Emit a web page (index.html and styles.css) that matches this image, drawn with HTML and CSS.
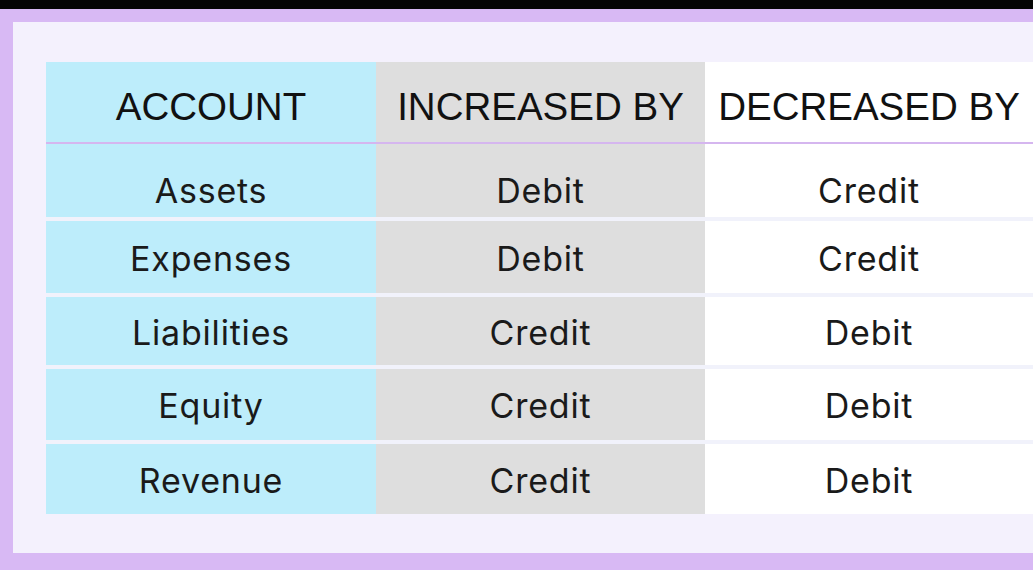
FILE: index.html
```html
<!DOCTYPE html>
<html>
<head>
<meta charset="utf-8">
<link rel="stylesheet" href="styles.css">
</head>
<body>
<div class="topbar"></div>
<div class="frame">
  <div class="panel">
    <div class="table">
      <div class="head">
        <div class="cell c1">ACCOUNT</div>
        <div class="cell c2">INCREASED BY</div>
        <div class="cell c3">DECREASED BY</div>
      </div>
      <div class="body">
        <div class="cell c1 first">Assets</div>
        <div class="cell c2 first">Debit</div>
        <div class="cell c3 first">Credit</div>
        <div class="cell c1">Expenses</div>
        <div class="cell c2">Debit</div>
        <div class="cell c3">Credit</div>
        <div class="cell c1">Liabilities</div>
        <div class="cell c2">Credit</div>
        <div class="cell c3">Debit</div>
        <div class="cell c1">Equity</div>
        <div class="cell c2">Credit</div>
        <div class="cell c3">Debit</div>
        <div class="cell c1">Revenue</div>
        <div class="cell c2">Credit</div>
        <div class="cell c3">Debit</div>
      </div>
    </div>
  </div>
</div>
</body>
</html>
```

FILE: styles.css
```css
html, body {
  margin: 0;
  padding: 0;
  height: 570px;
  overflow: hidden;
  background: #d8b9f4;
}
.topbar {
  height: 9px;
  background: #050505;
}
.frame {
  background: #d8b9f4;
  padding: 13px 0 0 13px;
  height: 548px;
  box-sizing: border-box;
}
.panel {
  background: #f4f1fd;
  height: 531px;
  box-sizing: border-box;
  padding: 40px 0 0 33px;
}
.table {
  width: 987px;
}
.head {
  display: grid;
  grid-template-columns: 330px 329px 328px;
  height: 80px;
  border-bottom: 2px solid #d5b6ef;
}
.head .cell {
  font-family: "Liberation Sans", Arial, sans-serif;
  font-size: 38.5px;
  color: #111;
  padding-top: 10px;
}
.body {
  display: grid;
  grid-template-columns: 330px 329px 328px;
  grid-template-rows: 73px 72px 68px 71px 70px;
  row-gap: 4px;
  background: #f1f2fb;
}
.cell {
  display: flex;
  align-items: center;
  justify-content: center;
  box-sizing: border-box;
}
.body .cell {
  font-family: Inter, "Liberation Sans", sans-serif;
  font-size: 34px;
  letter-spacing: 0.8px;
  color: #1a1a1a;
  padding-top: 2px;
}
.body .cell.first {
  padding-top: 20px;
}
.c1 { background: #bdedfb; }
.c2 { background: #dedede; }
.c3 { background: #ffffff; }
```
